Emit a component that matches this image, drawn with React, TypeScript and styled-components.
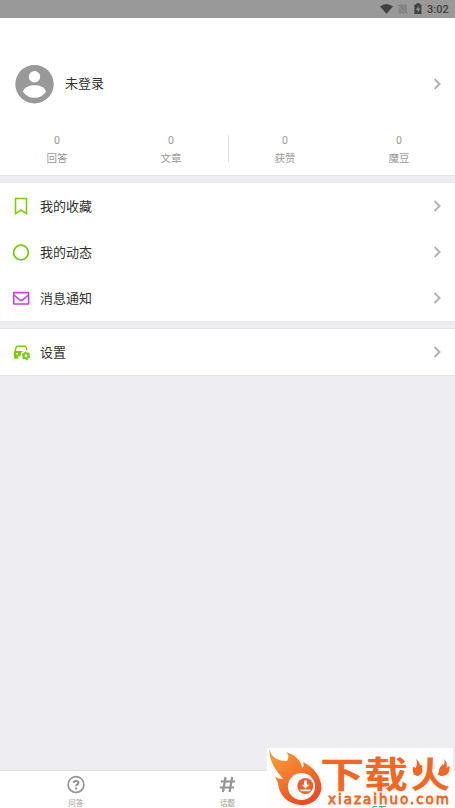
import React from "react";
import styled, { createGlobalStyle } from "styled-components";

const Global = createGlobalStyle`
  * { box-sizing: border-box; }
  body { margin: 0; background: #ededf2; font-family: Roboto, "Noto Sans CJK SC", sans-serif; }
`;

const Screen = styled.div`
  position: relative;
  display: flex;
  flex-direction: column;
  width: 455px;
  height: 808px;
  overflow: hidden;
  background: #ededf2;
`;

const StatusBar = styled.header`
  display: flex;
  align-items: center;
  justify-content: flex-end;
  height: 18px;
  flex: none;
  padding-right: 6px;
  background: #999;
  color: #404040;
  font-size: 11px;
  font-weight: 500;
  svg { display: block; }
`;

const Time = styled.span`
  width: 22px;
  padding-top: 1px;
  white-space: nowrap;
  line-height: 18px;
`;

const Panel = styled.section<{ $first?: boolean }>`
  flex: none;
  margin-bottom: 8px;
  background: #fff;
  box-shadow: ${(p) => (p.$first ? "0 1px 0 #e5e5e8" : "0 1px 0 #e5e5e8, 0 -1px 0 #e7e7ea")};
`;

const Profile = styled.div`
  display: flex;
  align-items: center;
  height: 68px;
  margin-top: 32px;
  padding: 0 13px 0 15px;
`;

const Name = styled.span`
  flex: 1;
  margin-left: 11px;
  color: #303030;
  font-size: 13px;
  line-height: 20px;
`;

const Stats = styled.div`
  display: grid;
  grid-template-columns: repeat(4, 114px);
  height: 57px;
  padding-top: 14px;
`;

const Stat = styled.div`
  display: flex;
  flex-direction: column;
  align-items: center;
  color: #999;
  font-size: 10.5px;
  line-height: 18px;
`;

const StatDivider = styled(Stat)`
  box-shadow: 1px 0 0 #e0e0e0;
  height: 27px;
  margin-top: 3px;
  > span:first-child { margin-top: -3px; }
`;

const Row = styled.div`
  display: flex;
  align-items: center;
  height: 46px;
  padding: 0 13px 0 12px;
`;

const RowLabel = styled.span`
  flex: 1;
  margin-left: 10px;
  padding-top: 1px;
  color: #303030;
  font-size: 13px;
  line-height: 20px;
`;

const Tabs = styled.nav`
  display: grid;
  grid-template-columns: repeat(3, 1fr);
  height: 37px;
  margin-top: auto;
  background: #fff;
  box-shadow: 0 -1px 0 #e3e3e7;
`;

const Tab = styled.div<{ $active?: boolean }>`
  display: flex;
  flex-direction: column;
  align-items: center;
  padding-top: 4px;
  color: ${(p) => (p.$active ? "#20a868" : "#999")};
  svg { flex: none; }
`;

const TabLabel = styled.span`
  margin-top: 4px;
  font-size: 7.5px;
  line-height: 12px;
`;

const Brand = styled.div`
  position: absolute;
  left: 267px;
  top: 748px;
  width: 186px;
  height: 60px;
  background: #fefefe;
  svg { display: block; }
`;

const Chevron = () => (
  <svg width="9" height="14" viewBox="0 0 9 14" fill="none" stroke="#b0b0b0" strokeWidth="1.9">
    <path d="M1.500 2l5 5-5 5" />
  </svg>
);

const Avatar = () => (
  <svg width="39" height="39" viewBox="0 0 39 39">
    <circle cx="19.500" cy="19.200" r="19.200" fill="#999" />
    <circle cx="19.500" cy="11.700" r="5.700" fill="#fff" />
    <path d="M8 26.400C9 22.200 15 20.300 19.500 20.300S30 22.200 31 26.400c-2.600 4.100-6.700 6.400-11.500 6.400S10.600 30.500 8 26.400z" fill="#fff" />
  </svg>
);

const iconProps = { width: 18, height: 18, viewBox: "0 0 18 18", fill: "none" };

const BookmarkIcon = () => (
  <svg {...iconProps} stroke="#7acb08" strokeWidth="1.500">
    <path d="M3.500 1.600h11v15L9 13l-5.500 3.600z" />
  </svg>
);
const CircleIcon = () => (
  <svg {...iconProps} stroke="#7acb08" strokeWidth="1.800">
    <circle cx="9" cy="9.500" r="7.400" />
  </svg>
);
const MailIcon = () => (
  <svg {...iconProps} stroke="#c043dd" strokeWidth="1.600">
    <rect x="1.700" y="3.600" width="14.900" height="11.400" rx=".5" />
    <path d="M2 6l6 5q1.200.9 2.400 0L16.400 6" />
  </svg>
);
const CarIcon = () => (
  <svg {...iconProps}>
    <path d="M3 8.500L4.100 4.400q.3-1.200 1.400-1.200h7.200q1.100 0 1.400 1.200l.8 3" stroke="#7acb08" strokeWidth="1.500" />
    <path d="M3 8h8q-2.300 1.500-2.500 4v1.300H6v1.500q0 1-1 1H3q-1 0-1-1V9q0-1 1-1z" fill="#7acb08" />
    <path d="M4 10.800h2" stroke="#fff" strokeWidth="1.400" />
    <circle cx="14" cy="12.800" r="2.500" stroke="#7acb08" strokeWidth="2.100" />
    <circle cx="14" cy="12.800" r="3.800" stroke="#7acb08" strokeWidth="1.200" strokeDasharray="1.990 1.989" />
  </svg>
);

const StatusIcons = () => (
  <svg width="47" height="18" viewBox="0 0 47 18">
    <path d="M0 6.600q6.500-5.200 13 0L6.500 13.800z" fill="#404040" />
    <path d="M20.500 4.200h6.300v9L19 5.700z" fill="#858585" />
    <path d="M18.600 6.800l6.800 6.800h-6.800z" fill="#858585" />
    <path d="M18.300 4.600l9 9" stroke="#707070" fill="none" strokeWidth=".9" />
    <path d="M36.200 3.200h3.600v1.300h1.600V14h-7V4.500h1.800z" fill="#404040" />
    <path d="M38.500 5.800L36 10h1.700v2.800L40.200 8.500h-1.700z" fill="#999" />
  </svg>
);

const HelpIcon = () => (
  <svg width="18" height="19" viewBox="0 0 18 19" fill="none" stroke="#949494">
    <circle cx="9" cy="9.600" r="7.900" strokeWidth="1.700" />
    <path d="M6.500 7.900q.2-2 2.600-2 2.400 0 2.400 1.900 0 1.100-1.200 1.700-1.200.600-1.200 1.800" strokeWidth="2" />
    <path d="M9.100 12.500v2" strokeWidth="2" />
  </svg>
);
const HashIcon = () => (
  <svg width="18" height="19" viewBox="0 0 18 19" fill="none" stroke="#949494" strokeWidth="2.200">
    <path d="M7.500 2L5 17M14.200 2l-2.600 15M2.800 6.500H17M1.800 12.500H16" />
  </svg>
);
const UserIcon = () => (
  <svg width="18" height="19" viewBox="0 0 18 19" fill="#20a868">
    <circle cx="9" cy="6" r="4" />
    <path d="M2 17q0-6 7-6t7 6z" />
  </svg>
);

const BrandLogo = () => (
  <svg width="186" height="60" viewBox="0 0 186 60">
    <defs>
      <linearGradient id="fire" x1="0" y1="0" x2=".6" y2="1">
        <stop offset="0" stopColor="#f9a13b" />
        <stop offset=".55" stopColor="#f5752b" />
        <stop offset="1" stopColor="#e94d24" />
      </linearGradient>
    </defs>
    <path d="M105 43h14v10h-14z" fill="#e3f3e8" />
    <path d="M2 1C5 10 11 13 20 13C22 9 22 7 19 4C28 7 34 12 35 20C37 18 37 17 36 14C49 20 55 32 54.500 41C53 50 45 57 36 57C21 57 12 47 11 35C10 32 9 31 8 29C11 30 13 31 16 31C12 25 3 18 2 1z" fill="url(#fire)" />
    <circle cx="34.500" cy="38.500" r="13.600" fill="#fff" />
    <circle cx="38.300" cy="38" r="8" fill="#ed6030" />
    <path d="M37 32.500h3v4.300h2.500l-4 3.700-4-3.700H37zM33.500 41.500H43.500v1.700h-10z" fill="#fff" />
    <g fill="#f26724" fontFamily='"Noto Sans CJK SC", sans-serif' fontWeight="700" fontSize="36">
      <text transform="translate(53 40) scale(1.230 1)">下</text>
      <text transform="translate(97 40) scale(1.220 1)">载</text>
      <text transform="translate(143.500 40) scale(1.100 1)">火</text>
    </g>
    <path d="M149 11q6 5 3 9l2.500-1.500q3 7-3 9-8-2-5-9l2 1.500q2.500-4 .5-9zM177 11q5 5 1 9.500L182.500 18q1 9-7 10-6-3-2-9.500l2 1.500q3-5 1.500-9z" fill="#f26724" />
    <g transform="translate(61 56)">
      <text fontFamily='"DejaVu Sans", sans-serif' fontSize="13.500" fill="#f26724" stroke="#f26724" strokeWidth=".8" textLength="121" lengthAdjust="spacing">xiazaihuo.com</text>
    </g>
    <path d="M106 58.500h4M112 58.500h7M105 60l2-1.500M114 60l2-1.500" stroke="#45b77e" />
  </svg>
);

const stats = ["回答", "文章", "获赞", "魔豆"];
const menu = [
  { label: "我的收藏", icon: <BookmarkIcon /> },
  { label: "我的动态", icon: <CircleIcon /> },
  { label: "消息通知", icon: <MailIcon /> },
];

export default function App() {
  return (
    <>
      <Global />
      <Screen>
        <StatusBar><StatusIcons /><Time>3:02</Time></StatusBar>
        <Panel $first>
          <Profile><Avatar /><Name>未登录</Name><Chevron /></Profile>
          <Stats>
            {stats.map((label, i) => {
              const Cell = i === 1 ? StatDivider : Stat;
              return <Cell key={label}><span>0</span><span>{label}</span></Cell>;
            })}
          </Stats>
        </Panel>
        <Panel>
          {menu.map((item) => (
            <Row key={item.label}>{item.icon}<RowLabel>{item.label}</RowLabel><Chevron /></Row>
          ))}
        </Panel>
        <Panel>
          <Row><CarIcon /><RowLabel>设置</RowLabel><Chevron /></Row>
        </Panel>
        <Tabs>
          <Tab><HelpIcon /><TabLabel>问答</TabLabel></Tab>
          <Tab><HashIcon /><TabLabel>话题</TabLabel></Tab>
          <Tab $active><UserIcon /></Tab>
        </Tabs>
        <Brand><BrandLogo /></Brand>
      </Screen>
    </>
  );
}
